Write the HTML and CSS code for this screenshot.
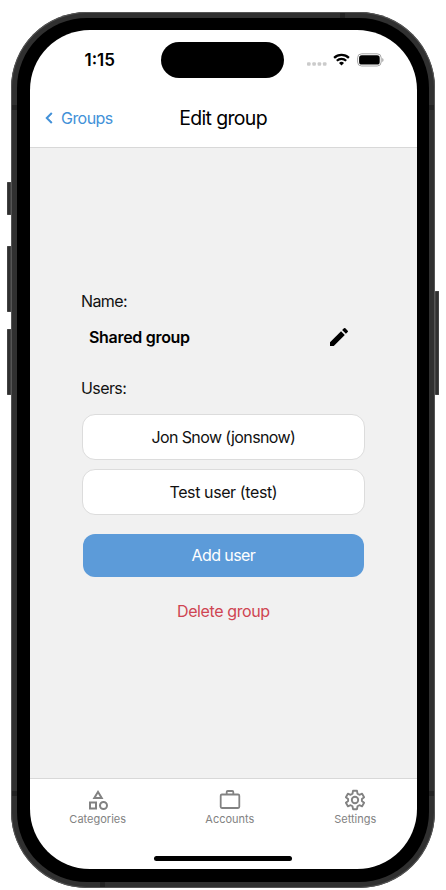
FILE: index.html
```html
<!DOCTYPE html>
<html lang="en">
<head>
<meta charset="utf-8">
<title>Edit group</title>
<link rel="stylesheet" href="styles.css">
</head>
<body>
<div class="phone">
  <i class="side-button action"></i>
  <i class="side-button volume-up"></i>
  <i class="side-button volume-down"></i>
  <i class="side-button power"></i>
  <i class="seam seam-tl"></i><i class="seam seam-tr"></i><i class="seam seam-bl"></i><i class="seam seam-br"></i><i class="seam seam-top"></i><i class="seam seam-bottom"></i>
  <div class="bezel">
    <div class="screen">
      <div class="status">
        <span class="time">1:15</span>
        <span class="island"></span>
        <div class="indicators">
          <svg width="20" height="4" viewBox="0 0 20 4" fill="#cbcbcb"><rect x="0" y="0.2" width="3.6" height="3.6" rx="1"/><rect x="5.3" y="0.2" width="3.6" height="3.6" rx="1"/><rect x="10.6" y="0.2" width="3.6" height="3.6" rx="1"/><rect x="15.9" y="0.2" width="3.6" height="3.6" rx="1"/></svg>
          <svg class="wifi" width="17" height="13" viewBox="0 0 17 13" fill="none" stroke="#000" stroke-width="2.2"><path d="M1.1 4.9a10.7 10.7 0 0 1 14.8 0"/><path d="M3.8 7.8a6.8 6.8 0 0 1 9.4 0"/><path d="M8.5 12.5L6 10a3.7 3.7 0 0 1 5 0z" fill="#000" stroke="none"/></svg>
          <svg class="battery" width="27" height="14" viewBox="0 0 27 14"><rect x="0.6" y="0.8" width="23.6" height="12.2" rx="4" fill="none" stroke="#a5a5a5"/><rect x="2.1" y="2.3" width="20.6" height="9.2" rx="2.6"/><path d="M25.3 4.9v4q1.2-.6 1.2-2t-1.2-2z" fill="#999"/></svg>
        </div>
      </div>
      <header class="header">
        <a class="back"><svg width="8" height="12" viewBox="0 0 8 12" fill="none" stroke="#4291d8" stroke-width="2"><path d="M6.8 1L1.8 6l5 5"/></svg><span class="back-label">Groups</span></a>
        <h1 class="title">Edit group</h1>
      </header>
      <main class="content">
        <div class="label name-label"><span>Name:</span></div>
        <div class="name-row">
          <strong class="name">Shared group</strong>
          <svg width="24" height="24" viewBox="0 0 24 24"><path d="M3 17.25V21h3.75L17.81 9.94l-3.75-3.75zM20.71 7.04a1 1 0 0 0 0-1.41l-2.34-2.34a1 1 0 0 0-1.41 0l-1.83 1.83 3.75 3.75z"/></svg>
        </div>
        <div class="label users-label"><span>Users:</span></div>
        <div class="user"><span class="jon">Jon Snow (jonsnow)</span></div>
        <div class="user"><span class="test">Test user (test)</span></div>
        <div class="add"><span>Add user</span></div>
        <div class="delete"><span>Delete group</span></div>
      </main>
      <nav class="tabs">
        <div class="tab categories"><svg width="24" height="24" viewBox="0 0 24 24" fill="#828282"><path d="M12 2l-5.500 9h11zm0 3.840L13.930 9h-3.870zM17.500 13a4.500 4.500 0 1 0 0 9 4.500 4.500 0 0 0 0-9zm0 7a2.500 2.500 0 1 1 0-5 2.500 2.500 0 0 1 0 5zM3 21.500h8v-8H3zm2-6h4v4H5z" fill-rule="evenodd"/></svg><span>Categories</span></div>
        <div class="tab accounts"><svg width="24" height="24" viewBox="0 0 24 24" fill="none" stroke="#828282" stroke-width="1.800"><rect x="2.700" y="6.500" width="18.600" height="13.500" rx="1.200"/><path d="M8.700 6.500V4q0-1 1-1h4.600q1 0 1 1v2.500"/></svg><span>Accounts</span></div>
        <div class="tab settings"><svg width="24" height="24" viewBox="0 0 24 24" fill="none" stroke="#828282" stroke-width="1.900" stroke-linejoin="round"><path d="M10 2.800h4l.5 2.900 1.900 1.100 2.700-1.100 2 3.500-2.200 1.800v2l2.200 1.800-2 3.500-2.700-1.100-1.900 1.100-.5 2.900h-4l-.5-2.900-1.900-1.100-2.700 1.100-2-3.500L5.100 13v-2L2.900 9.200l2-3.500 2.700 1.100 1.900-1.100z"/><circle cx="12" cy="12" r="3.200"/></svg><span>Settings</span></div>
      </nav>
      <div class="home"><i></i></div>
    </div>
  </div>
</div>
</body>
</html>
```
FILE: styles.css
```css
* { box-sizing: border-box; }
body { margin: 0; padding: 12px 0 0 11px; height: 890px; overflow: hidden; background: #fff; font-family: Inter, sans-serif; color: #111; }
svg { display: block; flex: none; }
span, strong, h1 { white-space: nowrap; }
.phone { position: relative; width: 424px; height: 876px; padding: 6px; border-radius: 76px; background: #303030; box-shadow: inset 0 0 0 1px #555; }
.bezel { height: 864px; padding: 12px 12.300px 13px 12.500px; border-radius: 70px; background: #000; }
.screen { display: flex; flex-direction: column; height: 839px; border-radius: 60px; overflow: hidden; background: #fff; }
.side-button { position: absolute; width: 4px; background: #303030; border-radius: 1px 0 0 1px; box-shadow: inset 0 0 0 .5px #555; }
.action { left: -4px; top: 170px; height: 33px; }
.volume-up { left: -4px; top: 234px; height: 66px; }
.volume-down { left: -4px; top: 317px; height: 66px; }
.power { right: -4px; top: 279px; height: 104px; }
.seam { position: absolute; width: 5px; height: 5px; background: #222; }
.seam-tl { left: 1px; top: 93px; }
.seam-tr { right: 1px; top: 93px; }
.seam-bl { left: 1px; top: 779px; }
.seam-br { right: 1px; top: 779px; }
.seam-top { left: 329px; top: 1px; }
.seam-bottom { left: 89px; bottom: 1px; }

.status { display: flex; align-items: center; height: 59px; padding-left: 55px; }
.time { width: 76.500px; font-size: 17px; font-weight: 600; color: #000; }
.island { width: 123px; height: 36px; border-radius: 18px; background: #000; }
.indicators { display: flex; align-items: center; margin-left: 22.500px; }
.indicators > svg:first-child { margin-top: 9px; }
.wifi { margin-left: 6.500px; }
.battery { margin-left: 7px; }
.header { position: relative; display: flex; align-items: center; justify-content: center; height: 58.500px; border-bottom: 1px solid #d8d8d8; }
.back { position: absolute; left: 15px; display: flex; align-items: center; gap: 8.500px; color: #4291d8; font-size: 16px; letter-spacing: -.55px; }
.title { margin: 0; font-size: 19.500px; font-weight: 400; letter-spacing: -.65px; color: #000; }

.content { height: 630px; padding: 143px 51px 0 51.500px; background: #f1f1f1; font-size: 16px; letter-spacing: -.6px; }
.label { height: 20px; line-height: 20px; }
.name-row { display: flex; align-items: center; justify-content: space-between; height: 24px; margin: 14px 14.500px 0 8px; }
.name { font-weight: 600; letter-spacing: -.3px; color: #000; }
.users-label { margin-top: 29px; }
.user { display: flex; align-items: center; justify-content: center; height: 45.500px; margin: 0 1px 9.500px 1px; border: 1px solid #dcdcdc; border-radius: 13px; background: #fff; }
.users-label + .user { margin-top: 16.500px; }
.test { letter-spacing: -.4px; }
.add { display: flex; align-items: center; justify-content: center; height: 43.500px; margin: 19px 1.500px 0; border-radius: 12px; background: #5c9bd9; color: #fff; }
.delete { height: 20px; margin-top: 23.500px; line-height: 20px; text-align: center; letter-spacing: -.4px; color: #cf4552; }

.tabs { display: flex; justify-content: space-around; height: 68px; padding-top: 9px; border-top: 1px solid #d8d8d8; }
.tab { display: flex; flex-direction: column; align-items: center; font-size: 11px; color: #828282; }
.tab span { line-height: 14px; }
.categories { width: 56.500px; }
.accounts { width: 48px; }
.settings { width: 43px; }
.home { display: flex; justify-content: center; padding-top: 10.500px; }
.home i { width: 138px; height: 5px; border-radius: 3px; background: #000; }
```
